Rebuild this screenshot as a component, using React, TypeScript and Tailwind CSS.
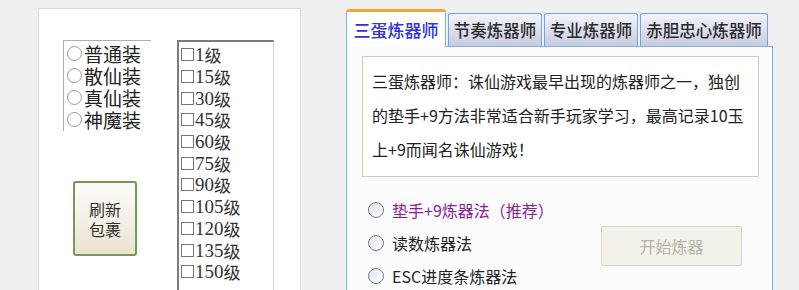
import React from 'react';

const cjk = { fontFamily: '"Noto Sans CJK SC", "Liberation Sans", sans-serif' };
const song = { fontFamily: '"Liberation Serif", "Noto Sans CJK SC", serif' };

const gearTypes = ['普通装', '散仙装', '真仙装', '神魔装'];
const levels = ['1', '15', '30', '45', '60', '75', '90', '105', '120', '135', '150'];
const tabs = [
  { name: '三蛋炼器师', w: 'w-[100px]' },
  { name: '节奏炼器师', w: 'w-[94px]' },
  { name: '专业炼器师', w: 'w-[94px]' },
  { name: '赤胆忠心炼器师', w: 'w-[128px]' },
];
const methods = [
  { label: '垫手+9炼器法（推荐）', color: 'text-[#8a1e96]' },
  { label: '读数炼器法', color: 'text-[#222]' },
  { label: 'ESC进度条炼器法', color: 'text-[#222]' },
];

function Radio() {
  return (
    <span className="w-[16px] h-[16px] rounded-full border border-[#6f7f95] bg-gradient-to-br from-[#dfe3ea] to-[#ffffff] shrink-0" />
  );
}

export default function App() {
  return (
    <main className="w-[799px] h-[290px] overflow-hidden bg-[#f0f0f0] flex items-start" style={cjk}>
      {/* left panel */}
      <section className="ml-[38px] mt-[8px] w-[263px] h-[300px] bg-white border border-[#dadada] flex">
        <div className="flex flex-col ml-[24px] mt-[31px] w-[88px]">
          <div className="h-[91px] border-l border-t border-[#b0b0b0] pt-[1px]">
            {gearTypes.map((g) => (
              <div key={g} className="flex items-center h-[22px] text-[19px] leading-none text-[#222]">
                <span className="w-[15px] h-[15px] rounded-full border border-[#9a9a9a] ml-[3px] mr-[2px]" />
                <span>{g}</span>
              </div>
            ))}
          </div>
          <button
            className="mt-[50px] ml-[10px] w-[64px] h-[75px] rounded-[3px] border-2 border-[#739a57] bg-gradient-to-b from-[#fdfcf9] to-[#ece4d2] text-[16px] leading-[20px] text-[#333] flex flex-col items-center justify-center"
          >
            <span>刷新</span>
            <span>包裹</span>
          </button>
        </div>
        <div className="ml-[26px] mt-[31px] w-[97px] h-[260px] border-t-2 border-l-2 border-[#7c7c7c] border-r border-r-[#d6d6d6] pt-[2px]">
          {levels.map((l) => (
            <div key={l} className="flex items-center h-[21.7px] text-[#333]">
              <span className="w-[13px] h-[13px] border border-[#777] ml-[2px] mr-[1px] shrink-0" />
              <span className="text-[19px] leading-none" style={song}>{l}</span>
              <span className="text-[17px] leading-none">级</span>
            </div>
          ))}
        </div>
      </section>

      {/* tab control */}
      <section className="ml-[45px] mt-[8px] w-[427px]">
        <div className="flex items-end gap-[2px] h-[38px]">
          {tabs.map((t, i) =>
            i === 0 ? (
              <div
                key={t.name}
                className={`${t.w} h-[38px] -mb-px relative z-10 bg-white border border-[#7db2e8] border-b-0 border-t-[3px] border-t-[#f2a43a] rounded-t-[3px] flex items-center justify-center text-[17px] font-medium text-[#3232d2]`}
              >
                {t.name}
              </div>
            ) : (
              <div
                key={t.name}
                className={`${t.w} h-[33px] border border-[#6ea8e4] border-b-0 rounded-t-[3px] bg-gradient-to-b from-[#f3f4fa] to-[#c8cce0] flex items-center justify-center text-[16.5px] font-medium text-[#2a2a2a]`}
              >
                {t.name}
              </div>
            )
          )}
        </div>
        <div className="w-[427px] h-[260px] border border-[#7db2e8] bg-[#fcfcfd] px-[15px] pt-[9px]">
          <div className="w-[397px] h-[121px] border border-[#c9d0b4] bg-white px-[9px] pt-[7px] text-[16px] leading-[34px] whitespace-nowrap text-[#222]">
            三蛋炼器师：诛仙游戏最早出现的炼器师之一，独创
            <br />
            的垫手+9方法非常适合新手玩家学习，最高记录10玉
            <br />
            上+9而闻名诛仙游戏！
          </div>
          <div className="flex mt-[23px]">
            <div className="flex flex-col gap-[13px] ml-[6px]">
              {methods.map((m) => (
                <div key={m.label} className="flex items-center h-[20px] gap-[8px]">
                  <Radio />
                  <span className={`text-[16px] ${m.color}`}>{m.label}</span>
                </div>
              ))}
            </div>
            <button className="ml-[auto] mr-[15px] mt-[26px] w-[141px] h-[40px] border border-[#d6d6cc] rounded-[2px] bg-[#f3f2ea] text-[16px] text-[#b4b4a6]">
              开始炼器
            </button>
          </div>
        </div>
      </section>
    </main>
  );
}
